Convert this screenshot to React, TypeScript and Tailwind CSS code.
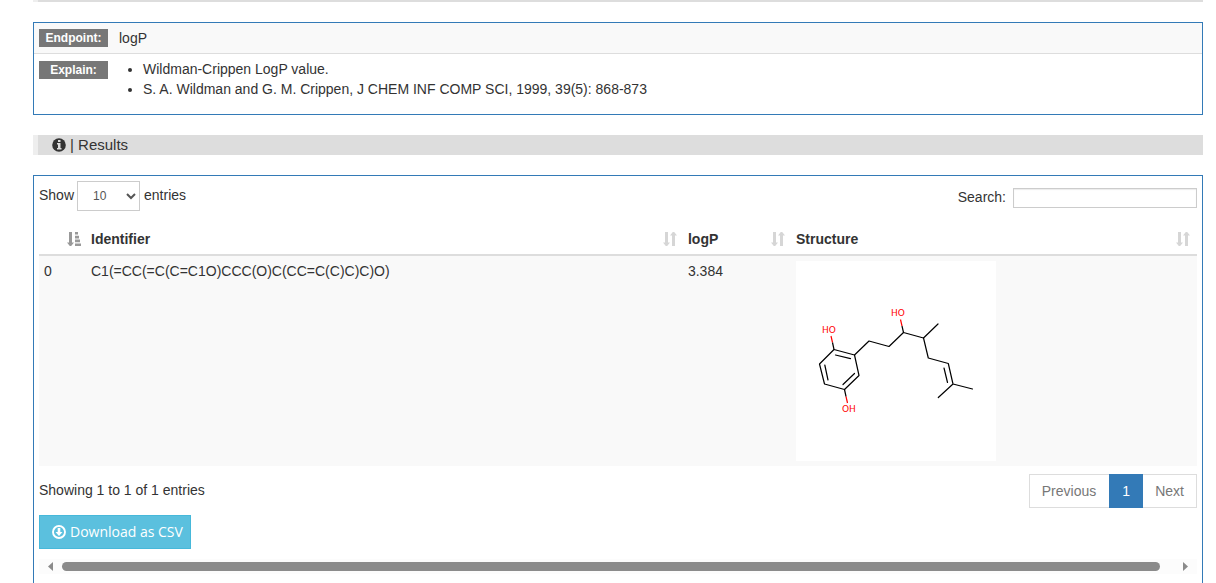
import React from "react";

function SortIcon() {
  return (
    <svg className="h-[14px] w-[14px] shrink-0 text-[#d6d6d6]" viewBox="0 0 14 14" fill="currentColor" aria-hidden="true">
      <path d="M2 0h3v10.500h2L4.200 14H2.800L0 10.500h2zM9 14h3V3.500h2L11.200 0H9.800L7 3.500h2z" />
    </svg>
  );
}

function SortActiveIcon() {
  return (
    <svg className="h-[14px] w-[14px] shrink-0 text-[#999]" viewBox="0 0 14 14" fill="currentColor" aria-hidden="true">
      <path d="M2 0h3v10.500h2L4.200 14H2.800L0 10.500h2zM8 0h3v2.600H8zM8 3.800h4v2.600H8zM8 7.600h5v2.600H8zM8 11.400h6V14H8z" />
    </svg>
  );
}

function InfoIcon() {
  return (
    <svg className="h-[14px] w-[14px] shrink-0" viewBox="0 0 14 14" aria-hidden="true">
      <circle cx="7" cy="7" r="6.800" fill="#333" />
      <path d="M6 2h2.500v2H6zM5 5h3.500v5H9.500v1.500H5V10h1V6.500H5z" fill="#ddd" />
    </svg>
  );
}

function DownloadIcon() {
  return (
    <svg className="h-[14px] w-[14px] shrink-0" viewBox="0 0 14 14" fill="none" aria-hidden="true">
      <circle cx="7" cy="7" r="6" stroke="white" strokeWidth="1.900" />
      <path d="M5.700 3h2.600v4h2.200L7 11 3.500 7h2.200z" fill="white" />
    </svg>
  );
}

function Molecule() {
  return (
    <svg className="block h-[200px] w-[200px] bg-white" viewBox="0 0 200 200" role="img" aria-label="Molecular structure">
      <g fill="none" stroke="black" strokeWidth="1.200" strokeLinecap="round" strokeLinejoin="round">
        <path d="M38 88.500 58.500 94 63 114.500 48.500 128.500 28.500 123 23.500 103Z" />
        <path d="M39.500 94 54.500 97.700M58.500 112.500 47 123.500M32 119 28.800 104" />
        <path d="M58.500 94 73 80 93 85.500 107.500 71.500 127.500 77 142 63" />
        <path d="M127.500 77 132.300 97 152.300 102.500 157 123 176.500 128M157 123 142.300 136.500" />
        <path d="M148 107 151.500 121.500" />
      </g>
      <g fill="none" stroke="red" strokeWidth="1.200">
        <path d="M36.500 81.500 35 75M106 65 104.500 58.500M50 135.500 51.500 142" />
      </g>
      <path d="M38 88.500 36.500 81.500M107.500 71.500 106 65M48.500 128.500 50 135.500" fill="none" stroke="black" strokeWidth="1.200" />
      <g fill="red" fontFamily="DejaVu Sans, sans-serif" fontSize="9">
        <text x="26" y="72">HO</text>
        <text x="95" y="55">HO</text>
        <text x="46" y="151">OH</text>
      </g>
    </svg>
  );
}

function Tag({ children }: { children: React.ReactNode }) {
  return (
    <span className="block h-[18px] w-[69px] shrink-0 bg-[#777] text-center text-[12px] font-bold leading-[18px] text-white">
      {children}
    </span>
  );
}

function Column({ label }: { label: string }) {
  return (
    <th scope="col" className="pb-[5px] pl-2 pr-[3px] pt-2 text-left font-bold last:pr-[7px]">
      <div className="flex items-center justify-between">
        {label}
        <SortIcon />
      </div>
    </th>
  );
}

export default function App() {
  return (
    <main className="h-screen overflow-hidden bg-white pl-[33px] pr-[13px] font-['Liberation_Sans',Arial,sans-serif] text-[14px] leading-5 text-[#333]">
      <div className="h-[2px] border-l-[5px] border-[#eee] bg-[#ddd]" />

      <section className="mt-5 border border-[#337ab7]">
        <div className="flex items-center gap-[11px] border-b border-[#ddd] bg-[#f9f9f9] p-[5px]">
          <Tag>Endpoint:</Tag>
          <span>logP</span>
        </div>
        <div className="flex gap-[11px] px-[5px] pb-[15px] pt-[5px]">
          <div className="pt-[2px]">
            <Tag>Explain:</Tag>
          </div>
          <ul className="list-disc pl-6">
            <li>Wildman-Crippen LogP value.</li>
            <li>S. A. Wildman and G. M. Crippen, J CHEM INF COMP SCI, 1999, 39(5): 868-873</li>
          </ul>
        </div>
      </section>

      <h2 className="mt-5 flex items-center gap-1 border-l-[5px] border-[#eee] bg-[#ddd] pl-[14px] text-[15px] leading-5">
        <InfoIcon />
        <span>| Results</span>
      </h2>

      <section className="mt-5 border border-b-0 border-[#337ab7] p-[5px] pb-[40px]">
        <div className="flex items-start justify-between">
          <label className="flex items-start">
            <span className="pt-1">Show</span>
            <select defaultValue="10" className="ml-[3px] mr-1 h-[30px] w-[63px] border border-[#ccc] bg-white pl-[11px] text-[12px] text-[#555]">
              <option>10</option>
              <option>25</option>
              <option>50</option>
              <option>100</option>
            </select>
            <span className="pt-1">entries</span>
          </label>
          <label className="flex items-start gap-[7px] pt-[6px]">
            Search:
            <input type="search" className="mt-px h-5 w-[184px] border border-[#ccc] bg-white px-1 shadow-[inset_0_1px_1px_rgba(0,0,0,0.08)] outline-none" />
          </label>
        </div>

        <table className="mt-[10px] w-full table-fixed border-collapse">
          <colgroup>
            <col className="w-[44px]" />
            <col className="w-[51.55%]" />
            <col className="w-[108px]" />
            <col />
          </colgroup>
          <thead>
            <tr className="border-b-2 border-[#ddd]">
              <th scope="col" aria-label="Index" aria-sort="ascending" className="pb-[5px] pr-[2px] pt-2">
                <div className="flex justify-end">
                  <SortActiveIcon />
                </div>
              </th>
              <Column label="Identifier" />
              <Column label="logP" />
              <Column label="Structure" />
            </tr>
          </thead>
          <tbody>
            <tr className="bg-[#f9f9f9] align-top">
              <td className="p-[5px]">0</td>
              <td className="py-[5px] pl-2">C1(=CC(=C(C=C1O)CCC(O)C(CC=C(C)C)C)O)</td>
              <td className="py-[5px] pl-2">3.384</td>
              <td className="py-[5px] pl-2">
                <Molecule />
              </td>
            </tr>
          </tbody>
        </table>

        <div className="flex items-start justify-between pt-2">
          <p className="pt-[6px]">Showing 1 to 1 of 1 entries</p>
          <nav aria-label="Pagination" className="flex h-[34px] text-[#777]">
            <button type="button" className="border border-r-0 border-[#ddd] pl-3 pr-[13px]">Previous</button>
            <button type="button" aria-current="page" className="w-[34px] bg-[#337ab7] text-white">1</button>
            <button type="button" className="border border-l-0 border-[#ddd] px-3">Next</button>
          </nav>
        </div>

        <button type="button" className="mt-[7px] flex h-[34px] items-center gap-1 border border-[#46b8da] bg-[#5bc0de] pl-3 pr-[7px] font-['Open_Sans',sans-serif] text-white">
          <DownloadIcon />
          Download as CSV
        </button>

        <div className="mt-[10px] flex h-[15px] items-center bg-[#fcfcfc] px-[9px]" aria-hidden="true">
          <svg className="h-[9px] w-[5px] shrink-0" viewBox="0 0 5 9" fill="#8b8b8b">
            <path d="M5 0v9L0 4.500z" />
          </svg>
          <div className="ml-[9px] mr-[23px] h-[9px] flex-1 rounded-full bg-[#8b8b8b]" />
          <svg className="h-[9px] w-[5px] shrink-0" viewBox="0 0 5 9" fill="#8b8b8b">
            <path d="M0 0v9l5-4.500z" />
          </svg>
        </div>
      </section>
    </main>
  );
}
